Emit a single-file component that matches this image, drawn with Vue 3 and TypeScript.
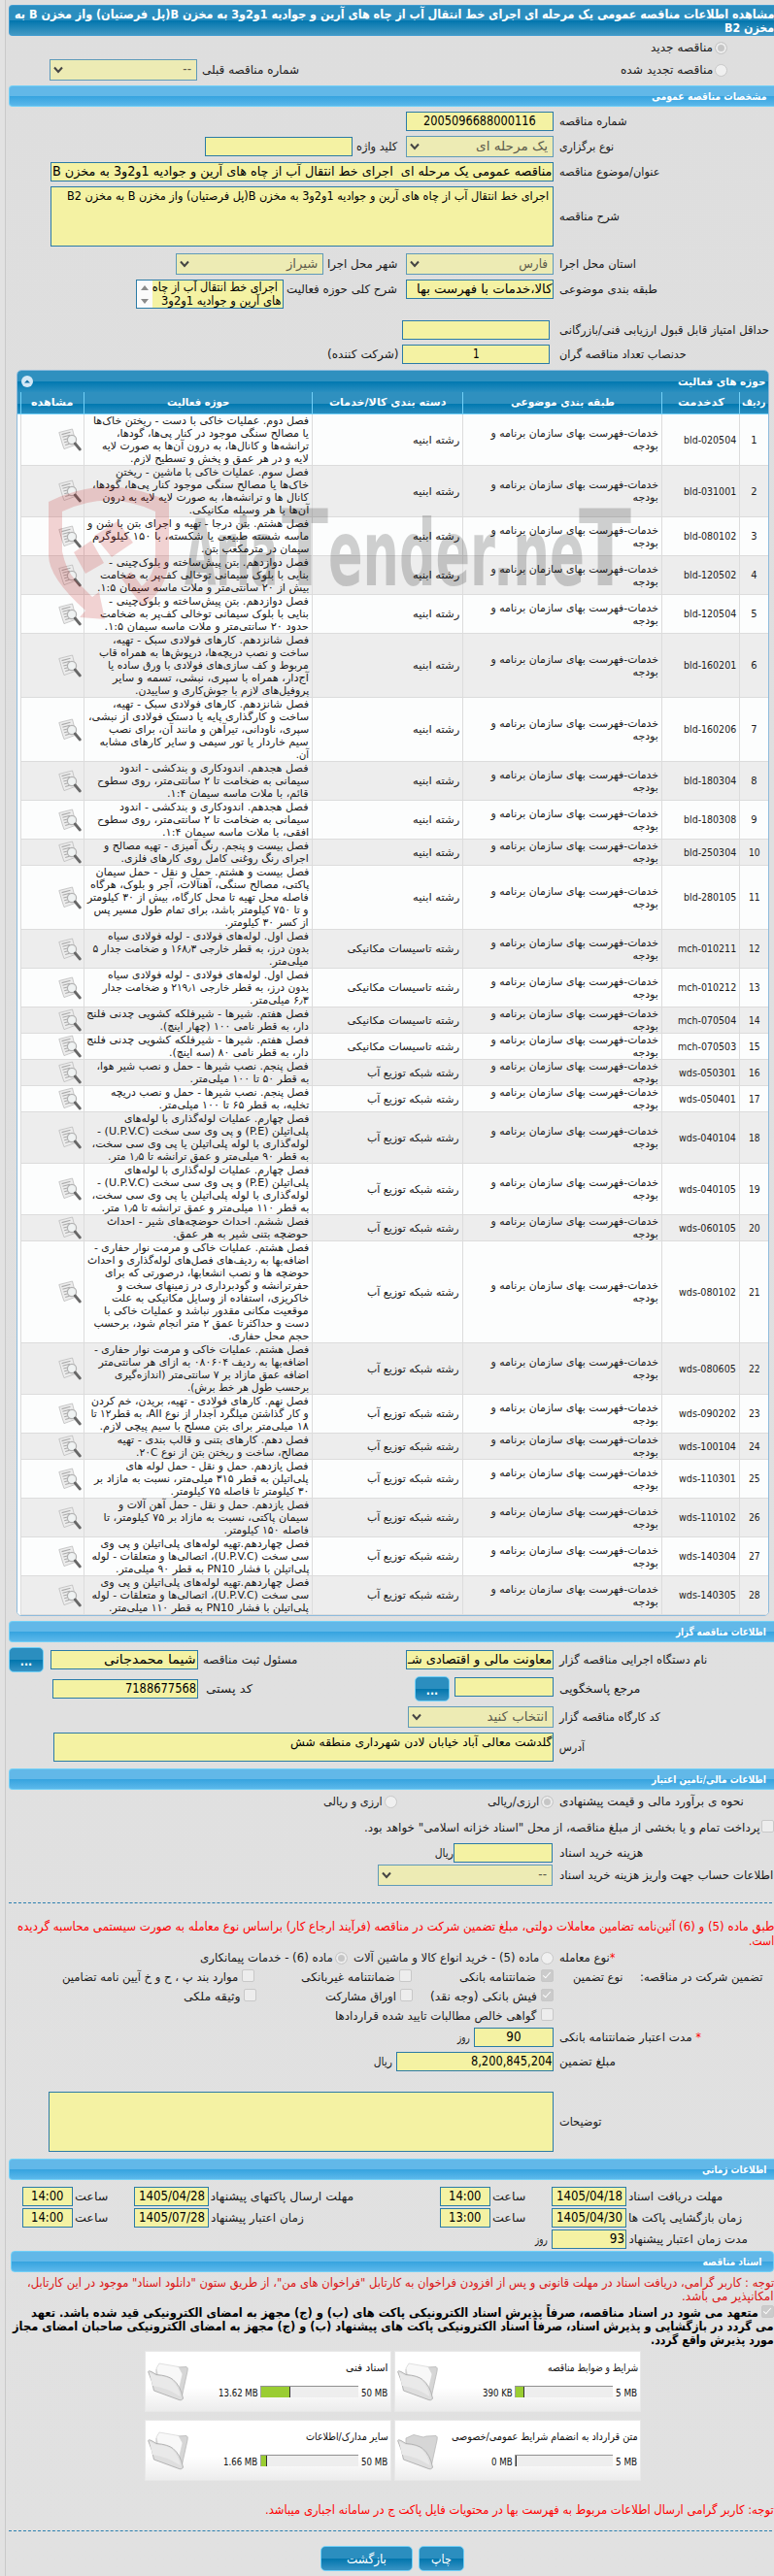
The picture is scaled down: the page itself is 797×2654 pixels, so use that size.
<script setup lang="ts">
import { defineComponent, h, onMounted, ref } from 'vue'

// One line of text, condensed or widened to the width of its slot.
const Fit = defineComponent({
  props: { w: { type: Number, required: true }, t: { type: String, required: true } },
  setup(props) {
    const inner = ref<HTMLElement | null>(null)
    const scale = ref(1)
    onMounted(() => {
      if (inner.value) scale.value = props.w / inner.value.offsetWidth
    })
    return () =>
      h('span', { class: 'fit', style: { width: props.w + 'px' } }, [
        h('span', { ref: inner, class: 'fit-in', style: { transform: `scaleX(${scale.value})` } }, props.t),
      ])
  },
})

type Line = [number, string]
interface Activity { code: string; group: number; lines: Line[] }

const groups: Line[] = [
  [48, 'رشته ابنیه'],
  [115.5, 'رشته تاسیسات مکانیکی'],
  [95, 'رشته شبکه توزیع آب'],
]
const codeWidth = (c: string) => (c.startsWith('bld') ? 54.5 : c.startsWith('mch') ? 60.5 : 59)

const activities: Activity[] = [
  { code: 'bld-020504', group: 0, lines: [[222, 'فصل دوم. عملیات خاکی با دست - ریختن خاک‌ها'], [198, 'یا مصالح سنگی موجود در کنار پی‌ها، گودها،'], [213, 'ترانشه‌ها و کانال‌ها، به درون آن‌ها به صورت لایه'], [184, 'لایه و در هر عمق و پخش و تسطیح لازم.']] },
  { code: 'bld-031001', group: 0, lines: [[199, 'فصل سوم. عملیات خاکی با ماشین - ریختن'], [223, 'خاک‌ها یا مصالح سنگی موجود کنار پی‌ها، گودها،'], [212.5, 'کانال ها و ترانشه‌ها، به صورت لایه لایه به درون'], [123.5, 'آن‌ها با هر وسیله مکانیکی.']] },
  { code: 'bld-080102', group: 0, lines: [[228, 'فصل هشتم. بتن درجا - تهیه و اجرای بتن با شن و'], [223, 'ماسه شسته طبیعی یا شکسته، با ۱۵۰ کیلوگرم'], [111, 'سیمان در مترمکعب بتن.']] },
  { code: 'bld-120502', group: 0, lines: [[206, 'فصل دوازدهم. بتن پیش‌ساخته و بلوک‌چینی -'], [215, 'بنایی با بلوک سیمانی توخالی کف‌پر به ضخامت'], [218, 'بیش از ۲۰ سانتی‌متر و ملات ماسه سیمان ۱:۵.']] },
  { code: 'bld-120504', group: 0, lines: [[206, 'فصل دوازدهم. بتن پیش‌ساخته و بلوک‌چینی -'], [215, 'بنایی با بلوک سیمانی توخالی کف‌پر به ضخامت'], [210.5, 'حدود ۲۰ سانتی‌متر و ملات ماسه سیمان ۱:۵.']] },
  { code: 'bld-160201', group: 0, lines: [[202, 'فصل شانزدهم. کارهای فولادی سبک - تهیه،'], [216, 'ساخت و نصب دریچه‌ها، درپوش‌ها به همراه قاب'], [207, 'مربوط و کف سازی‌های فولادی با ورق ساده یا'], [202, 'آج‌دار، همراه با سپری، نبشی، تسمه و سایر'], [179, 'پروفیل‌های لازم با جوش‌کاری و ساییدن.']] },
  { code: 'bld-160206', group: 0, lines: [[202, 'فصل شانزدهم. کارهای فولادی سبک - تهیه،'], [227, 'ساخت و کارگذاری پایه یا دستک فولادی از نبشی،'], [206, 'سپری، ناودانی، تیرآهن و مانند آن، برای نصب'], [215.5, 'سیم خاردار یا تور سیمی و سایر کارهای مشابه'], [13, 'آن.']] },
  { code: 'bld-180304', group: 0, lines: [[195, 'فصل هجدهم. اندودکاری و بندکشی - اندود'], [218, 'سیمانی به ضخامت تا ۲ سانتی‌متر، روی سطوح'], [146, 'قائم، با ملات ماسه سیمان ۱:۴.']] },
  { code: 'bld-180308', group: 0, lines: [[195, 'فصل هجدهم. اندودکاری و بندکشی - اندود'], [218, 'سیمانی به ضخامت تا ۲ سانتی‌متر، روی سطوح'], [151, 'افقی، با ملات ماسه سیمان ۱:۴.']] },
  { code: 'bld-250304', group: 0, lines: [[211, 'فصل بیست و پنجم. رنگ آمیزی - تهیه مصالح و'], [193.5, 'اجرای رنگ روغنی کامل روی کارهای فلزی.']] },
  { code: 'bld-280105', group: 0, lines: [[219.5, 'فصل بیست و هشتم. حمل و نقل - حمل سیمان'], [225, 'پاکتی، مصالح سنگی، آهنآلات، آجر و بلوک، هرگاه'], [228, 'فاصله محل تهیه تا محل کارگاه، بیش از ۳۰ کیلومتر'], [221.5, 'و تا ۷۵۰ کیلومتر باشد، برای تمام طول مسیر پس'], [86.5, 'از کسر ۳۰ کیلومتر.']] },
  { code: 'mch-010211', group: 1, lines: [[207, 'فصل اول. لوله‌های فولادی - لوله فولادی سیاه'], [222.5, 'بدون درز، به قطر خارجی ۱۶۸٫۳ و ضخامت جدار ۵'], [41, 'میلی‌متر.']] },
  { code: 'mch-010212', group: 1, lines: [[207, 'فصل اول. لوله‌های فولادی - لوله فولادی سیاه'], [212.5, 'بدون درز، به قطر خارجی ۲۱۹٫۱ و ضخامت جدار'], [61, '۶٫۳ میلی‌متر.']] },
  { code: 'mch-070504', group: 1, lines: [[229, 'فصل هفتم. شیرها - شیرفلکه کشویی چدنی فلنج'], [153.5, 'دار، به قطر نامی ۱۰۰ (چهار اینچ).']] },
  { code: 'mch-070503', group: 1, lines: [[229, 'فصل هفتم. شیرها - شیرفلکه کشویی چدنی فلنج'], [144, 'دار، به قطر نامی ۸۰ (سه اینچ).']] },
  { code: 'wds-050301', group: 2, lines: [[218.5, 'فصل پنجم. نصب شیرها - حمل و نصب شیر هوا،'], [122.5, 'به قطر ۵۰ تا ۱۰۰ میلی‌متر.']] },
  { code: 'wds-050401', group: 2, lines: [[204, 'فصل پنجم. نصب شیرها - حمل و نصب دریچه'], [154.5, 'تخلیه، به قطر ۶۵ تا ۱۰۰ میلی‌متر.']] },
  { code: 'wds-040104', group: 2, lines: [[190, 'فصل چهارم. عملیات لوله‌گذاری با لوله‌های'], [218, 'پلی‌اتیلن (P.E) و پی وی سی سخت (U.P.V.C) -'], [223.5, 'لوله‌گذاری با لوله پلی‌اتیلن یا پی وی سی سخت،'], [207, 'به قطر ۹۰ میلی‌متر و عمق ترانشه تا ۱٫۵ متر.']] },
  { code: 'wds-040105', group: 2, lines: [[190, 'فصل چهارم. عملیات لوله‌گذاری با لوله‌های'], [218, 'پلی‌اتیلن (P.E) و پی وی سی سخت (U.P.V.C) -'], [223.5, 'لوله‌گذاری با لوله پلی‌اتیلن یا پی وی سی سخت،'], [213.5, 'به قطر ۱۱۰ میلی‌متر و عمق ترانشه تا ۱٫۵ متر.']] },
  { code: 'wds-060105', group: 2, lines: [[208, 'فصل ششم. احداث حوضچه‌های شیر - احداث'], [140, 'حوضچه بتنی شیر به هر عمق.']] },
  { code: 'wds-080102', group: 2, lines: [[221, 'فصل هشتم. عملیات خاکی و مرمت نوار حفاری -'], [228, 'اضافه‌بها به ردیف‌های فصل‌های لوله‌گذاری و احداث'], [210, 'حوضچه ها و نصب انشعابها، درصورتی که برای'], [197, 'حفرترانشه و گودبرداری در زمینهای سخت و'], [203, 'خاکریزی، استفاده از وسایل مکانیکی به علت'], [211, 'موقعیت مکانی مقدور نباشد و عملیات خاکی با'], [221.5, 'دست و حداکثرتا عمق ۲ متر انجام شود، برحسب'], [83, 'حجم محل حفاری.']] },
  { code: 'wds-080605', group: 2, lines: [[221, 'فصل هشتم. عملیات خاکی و مرمت نوار حفاری -'], [216.5, 'اضافه‌بها به ردیف ۰۸۰۶۰۴ به ازای هر سانتی‌متر'], [200, 'اضافه عمق مازاد بر ۷ سانتی‌متر (اندازه‌گیری'], [125, 'برحسب طول هر خط برش).']] },
  { code: 'wds-090202', group: 2, lines: [[224, 'فصل نهم. کارهای فولادی - تهیه، بریدن، خم کردن'], [224.5, 'و کار گذاشتن میلگرد آجدار از نوع AII، به قطر۱۲ تا'], [215.5, '۱۸ میلی‌متر برای بتن مسلح با سیم پیچی لازم.']] },
  { code: 'wds-100104', group: 2, lines: [[197.5, 'فصل دهم. کارهای بتنی و قالب بندی - تهیه'], [178, 'مصالح، ساخت و ریختن بتن از نوع ۲۰C.']] },
  { code: 'wds-110301', group: 2, lines: [[188.5, 'فصل یازدهم. حمل و نقل - حمل لوله های'], [221, 'پلی‌اتیلن به قطر ۳۱۵ میلی‌متر، نسبت به مازاد بر'], [142.5, '۳۰ کیلومتر تا فاصله ۷۵ کیلومتر.']] },
  { code: 'wds-110102', group: 2, lines: [[196, 'فصل یازدهم. حمل و نقل - حمل آهن آلات و'], [211.5, 'سیمان پاکتی، نسبت به مازاد بر ۷۵ کیلومتر، تا'], [87.5, 'فاصله ۱۵۰ کیلومتر.']] },
  { code: 'wds-140304', group: 2, lines: [[214.5, 'فصل چهاردهم.تهیه لوله‌های پلی‌اتیلن و پی وی'], [223.5, 'سی سخت (U.P.V.C)، اتصالی‌ها و متعلقات - لوله'], [199, 'پلی‌اتیلن با فشار PN10 به قطر ۹۰ میلی‌متر.']] },
  { code: 'wds-140305', group: 2, lines: [[214.5, 'فصل چهاردهم.تهیه لوله‌های پلی‌اتیلن و پی وی'], [223.5, 'سی سخت (U.P.V.C)، اتصالی‌ها و متعلقات - لوله'], [206, 'پلی‌اتیلن با فشار PN10 به قطر ۱۱۰ میلی‌متر.']] },
]

const heads: Line[] = [[24, 'ردیف'], [48, 'کدخدمت'], [107, 'طبقه بندی موضوعی'], [120, 'دسته بندی کالا/خدمات'], [64, 'حوزه فعالیت'], [43, 'مشاهده']]

interface Doc { title: Line; max: Line; used: Line; fill: number; empty?: boolean }
const docs: Doc[] = [
  { title: [93, 'شرایط و ضوابط مناقصه'], max: [22.5, '5 MB'], used: [31, '390 KB'], fill: 9 },
  { title: [44, 'اسناد فنی'], max: [27.5, '50 MB'], used: [41, '13.62 MB'], fill: 30 },
  { title: [192, 'متن قرارداد به انضمام شرایط عمومی/خصوصی'], max: [22.5, '5 MB'], used: [22, '0 MB'], fill: 1, empty: true },
  { title: [85, 'سایر مدارک/اطلاعات'], max: [27.5, '50 MB'], used: [35.5, '1.66 MB'], fill: 6 },
]
</script>

<template>
  <div class="page">
    <div class="sheet" dir="rtl">
      <header class="bar main-bar">
        <Fit :w="782" t="مشاهده اطلاعات مناقصه عمومی یک مرحله ای اجرای خط انتقال آب از چاه های آرین و جوادیه 1و2و3 به مخزن B(پل فرصتیان) واز مخزن B به" />
        <Fit :w="51" t="مخزن B2" />
      </header>

      <div class="row h24 pad51"><i class="radio on"></i><Fit class="ms2" :w="64" t="مناقصه جدید" /></div>
      <div class="row h22 pad51">
        <i class="radio"></i><Fit class="ms2" :w="95" t="مناقصه تجدید شده" />
        <Fit class="prev-label" :w="100" t="شماره مناقصه قبلی" />
        <span class="field select w152 ms5"><Fit :w="9" t="--" /><svg class="chev" viewBox="0 0 10 8"><path d="M1 1.5 5 6 9 1.5" /></svg></span>
      </div>

      <div class="bar sub-bar mt5"><Fit :w="119" t="مشخصات مناقصه عمومی" /></div>
      <div class="row h30">
        <span class="lab"><Fit :w="70" t="شماره مناقصه" /></span>
        <span class="field w152 center"><Fit :w="116" t="2005096688000116" /></span>
      </div>
      <div class="row h22">
        <span class="lab"><Fit :w="56" t="نوع برگزاری" /></span>
        <span class="field select w152"><Fit :w="74" t="یک مرحله ای" /><svg class="chev" viewBox="0 0 10 8"><path d="M1 1.5 5 6 9 1.5" /></svg></span>
        <Fit class="ms9" :w="42" t="کلید واژه" />
        <span class="field w152 ms4"></span>
      </div>
      <div class="row h30">
        <span class="lab"><Fit :w="103" t="عنوان/موضوع مناقصه" /></span>
        <span class="field w518"><Fit :w="514" t="مناقصه عمومی یک مرحله ای  اجرای خط انتقال آب از چاه های آرین و جوادیه 1و2و3 به مخزن B" /></span>
      </div>
      <div class="row h62">
        <span class="lab"><Fit :w="62" t="شرح مناقصه" /></span>
        <span class="field area w518 pe4 t12"><Fit :w="496" t="اجرای خط انتقال آب از چاه های آرین و جوادیه 1و2و3 به مخزن B(پل فرصتیان) واز مخزن B به مخزن B2" /></span>
      </div>
      <div class="row h22 mt7">
        <span class="lab"><Fit :w="79" t="استان محل اجرا" /></span>
        <span class="field select w152"><Fit :w="30" t="فارس" /><svg class="chev" viewBox="0 0 10 8"><path d="M1 1.5 5 6 9 1.5" /></svg></span>
        <Fit class="ms9" :w="72" t="شهر محل اجرا" />
        <span class="field select w152 ms4"><Fit :w="32" t="شیراز" /><svg class="chev" viewBox="0 0 10 8"><path d="M1 1.5 5 6 9 1.5" /></svg></span>
      </div>
      <div class="row h30 mt5 top">
        <span class="lab lh20"><Fit :w="101" t="طبقه بندی موضوعی" /></span>
        <span class="field w152"><Fit :w="139" t="کالا،خدمات با فهرست بها" /></span>
        <span class="ms9 lh20"><Fit :w="114" t="شرح کلی حوزه فعالیت" /></span>
        <span class="field area scroll w152 ms3">
          <span class="scroll-text"><Fit class="me4" :w="129" t="اجرای خط انتقال آب از چاه" /><Fit :w="124" t="های آرین و جوادیه 1و2و3" /></span>
          <svg class="scrollbar" viewBox="0 0 16 28"><path d="M4 10 8 5 12 10ZM4 19 8 24 12 19Z" /></svg>
        </span>
      </div>
      <div class="row h20 mt12">
        <span class="lab wide"><Fit :w="216" t="حداقل امتیاز قابل قبول ارزیابی فنی/بازرگانی" /></span><span class="field w152"></span>
      </div>
      <div class="row h20 mt5">
        <span class="lab wide"><Fit :w="131" t="حدنصاب تعداد مناقصه گران" /></span>
        <span class="field w152 center"><Fit :w="7" t="1" /></span><Fit class="ms3" :w="74" t="(شرکت کننده)" />
      </div>

      <section class="table">
        <div class="title-bar">
          <Fit :w="90" t="حوزه های فعالیت" />
          <svg class="collapse" viewBox="0 0 12 12"><circle cx="6" cy="6" r="6" fill="#d4e8f6" /><path d="M3 7.4 6 4.4 9 7.4Z" fill="#126fa4" /></svg>
        </div>
        <div class="trow thead"><span v-for="hd in heads" :key="hd[1]"><Fit :w="hd[0]" :t="hd[1]" /></span><span></span></div>
        <div v-for="(a, i) in activities" :key="a.code" class="trow tbody" :class="{ alt: i % 2 === 1 }">
          <span class="num"><Fit :w="i < 9 ? 6 : 12" :t="String(i + 1)" /></span>
          <span class="code" dir="ltr"><Fit :w="codeWidth(a.code)" :t="a.code" /></span>
          <span class="cat"><Fit :w="172.5" t="خدمات-فهرست بهای سازمان برنامه و" /><Fit :w="26.5" t="بودجه" /></span>
          <span class="grp"><Fit :w="groups[a.group][0]" :t="groups[a.group][1]" /></span>
          <span class="desc"><Fit v-for="(l, k) in a.lines" :key="k" :w="l[0]" :t="l[1]" /></span>
          <span class="view">
            <svg viewBox="0 0 24 24">
              <path d="M0.8 4.5 14.5 1 18.6 17 6 21.6C3.5 15 2.5 10 .8 4.5Z" fill="#ececec" stroke="#b4b4b4" stroke-width=".7" />
              <path d="M3.5 6.6 12.5 4.2M4.4 9.3 12 7.3M5.3 12 10.5 10.7M6.2 14.7 10 13.7M7.2 17.5 11.5 16.2" stroke="#aaa" stroke-width="1.1" />
              <circle cx="14" cy="12" r="4.6" fill="#f0f3f3" fill-opacity=".85" stroke="#b2b2b2" stroke-width="1.2" />
              <path d="M17.3 16 22.3 22" stroke="#686868" stroke-width="2.8" stroke-linecap="round" />
            </svg>
          </span>
          <span></span>
        </div>
        <svg class="watermark" viewBox="0 0 610 150">
          <g fill="#c00000" fill-opacity=".17">
            <path d="M0 17Q62-14 124 17V76Q122 108 97 125L75 96 85 89 96 104Q110 92 110 70V27Q62 4 14 27V68Q18 88 28 98L45 115 52 110 58 138 32 136 38 129Q0 95 0 72Z" />
            <path d="M26 69 44 57 57 80 38 91ZM47 52 71 37 87 59 65 74Z" />
          </g>
          <g fill="#000" fill-opacity=".18">
            <text x="140" y="103" font-size="94" textLength="96" lengthAdjust="spacingAndGlyphs">Aria</text>
            <text x="240" y="103" font-size="108" textLength="48" lengthAdjust="spacingAndGlyphs">T</text>
            <text x="288" y="103" font-size="94" textLength="172" lengthAdjust="spacingAndGlyphs">ender</text>
            <text x="458" y="103" font-size="94" textLength="94" lengthAdjust="spacingAndGlyphs">.ne</text>
            <text x="546" y="103" font-size="108" textLength="54" lengthAdjust="spacingAndGlyphs">T</text>
          </g>
        </svg>
      </section>

      <div class="bar sub-bar mt5"><Fit :w="93" t="اطلاعات مناقصه گزار" /></div>
      <div class="row h26 mt5">
        <span class="lab"><Fit :w="152" t="نام دستگاه اجرایی مناقصه گزار" /></span>
        <span class="field w152"><Fit :w="148" t="معاونت مالی و اقتصادی شـ" /></span>
        <Fit class="reg-label" :w="97" t="مسئول ثبت مناقصه" />
        <span class="field w152 ms5"><Fit :w="95" t="شیما محمدجانی" /></span>
        <span class="btn more ms7">...</span>
      </div>
      <div class="row h26 mt4">
        <span class="lab"><Fit :w="83" t="مرجع پاسخگویی" /></span>
        <span class="field w102 up2"></span><span class="btn more ms5">...</span>
        <Fit class="zip-label" :w="48" t="کد پستی" /><span class="field w150 ms8"><Fit :w="73" t="7188677568" /></span>
      </div>
      <div class="row h22 mt5">
        <span class="lab"><Fit :w="104" t="کد کارگاه مناقصه گزار" /></span>
        <span class="field select w150"><Fit :w="62.5" t="انتخاب کنید" /><svg class="chev" viewBox="0 0 10 8"><path d="M1 1.5 5 6 9 1.5" /></svg></span>
      </div>
      <div class="row h30 mt5">
        <span class="lab"><Fit :w="26" t="آدرس" /></span>
        <span class="field area w515 t12"><Fit :w="269" t="گلدشت معالی آباد خیابان لادن شهرداری منطقه شش" /></span>
      </div>

      <div class="bar sub-bar mt7"><Fit :w="118" t="اطلاعات مالی/تامین اعتبار" /></div>
      <div class="row h24">
        <span class="lab"><Fit :w="190" t="نحوه ی برآورد مالی و قیمت پیشنهادی" /></span>
        <i class="radio on"></i><Fit class="ms2" :w="53" t="ارزی/ریالی" />
        <i class="radio far"></i><Fit class="ms2" :w="61" t="ارزی و ریالی" />
      </div>
      <div class="row h20 mt5 pad3"><i class="check up2"></i><Fit class="ms1" :w="408" t="پرداخت تمام و یا بخشی از مبلغ مناقصه، از محل &quot;اسناد خزانه اسلامی&quot; خواهد بود." /></div>
      <div class="row h20 cost">
        <span class="lab one"><Fit :w="86" t="هزینه خرید اسناد" /></span><span class="field w102"></span><Fit :w="19" t="ریال" />
      </div>
      <div class="row h22 mt2">
        <span class="lab one"><Fit :w="220" t="اطلاعات حساب جهت واریز هزینه خرید اسناد" /></span>
        <span class="field select w180"><Fit :w="9" t="--" /><svg class="chev" viewBox="0 0 10 8"><path d="M1 1.5 5 6 9 1.5" /></svg></span>
      </div>

      <div class="rule first-rule"></div>
      <p class="notice bright first-notice">
        <Fit :w="779" t="طبق ماده (5) و (6) آئین‌نامه تضامین معاملات دولتی، مبلغ تضمین شرکت در مناقصه (فرآیند ارجاع کار) براساس نوع معامله به صورت سیستمی محاسبه گردیده" />
        <Fit :w="26" t="است." />
      </p>
      <div class="row h20">
        <span class="lab"><b class="star">*</b><Fit :w="52" t="نوع معامله" /></span>
        <i class="radio"></i><Fit class="ms2" :w="191" t="ماده (5) - خرید انواع کالا و ماشین آلات" />
        <i class="radio on ms6"></i><Fit class="ms2" :w="137" t="ماده (6) - خدمات پیمانکاری" />
      </div>
      <div class="row h20 kinds">
        <span class="kind-head"><Fit :w="126" t="تضمین شرکت در مناقصه:" /><Fit :w="52" t="نوع تضمین" /></span>
        <i class="check on"></i><Fit class="ms5" :w="79" t="ضمانتنامه بانکی" />
        <i class="check k1"></i><Fit class="ms4" :w="97" t="ضمانتنامه غیربانکی" />
        <i class="check k2"></i><Fit class="ms4" :w="181" t="موارد بند پ ، ح و خ آیین نامه تضامین" />
      </div>
      <div class="row h20 kinds">
        <span class="lab"></span>
        <i class="check on"></i><Fit class="ms4" :w="110" t="فیش بانکی (وجه نقد)" />
        <i class="check k3"></i><Fit class="ms4" :w="73" t="اوراق مشارکت" />
        <i class="check k4"></i><Fit class="ms4" :w="58" t="وثیقه ملکی" />
      </div>
      <div class="row h20 kinds"><span class="lab"></span><i class="check"></i><Fit class="ms5" :w="207" t="گواهی خالص مطالبات تایید شده قراردادها" /></div>
      <div class="row h20 mt2">
        <span class="lab"><b class="star">*</b>&nbsp;<Fit :w="137" t="مدت اعتبار ضمانتنامه بانکی" /></span>
        <span class="field w82 center"><Fit :w="15" t="90" /></span><Fit class="ms4" :w="13" t="روز" />
      </div>
      <div class="row h20 mt5">
        <span class="lab"><Fit :w="58" t="مبلغ تضمین" /></span>
        <span class="field w162"><Fit :w="84" t="8,200,845,204" /></span><Fit class="ms4" :w="19" t="ریال" />
      </div>
      <div class="row h62 mt21"><span class="lab"><Fit :w="43" t="توضیحات" /></span><span class="field area w520"></span></div>

      <div class="bar sub-bar mt7"><Fit :w="66" t="اطلاعات زمانی" /></div>
      <div class="times">
        <div class="row h20">
          <span class="tlab"><Fit :w="97" t="مهلت دریافت اسناد" /></span><span class="field w77 center"><Fit :w="68" t="1405/04/18" /></span>
          <Fit class="hour" :w="34" t="ساعت" /><span class="field w52 center ms2"><Fit :w="33" t="14:00" /></span>
          <span class="tlab second"><Fit :w="147.5" t="مهلت ارسال پاکتهای پیشنهاد" /></span><span class="field w77 center"><Fit :w="68" t="1405/04/28" /></span>
          <Fit class="hour" :w="34" t="ساعت" /><span class="field w52 center ms2"><Fit :w="33" t="14:00" /></span>
        </div>
        <div class="row h20">
          <span class="tlab"><Fit :w="117" t="زمان بازگشایی پاکت ها" /></span><span class="field w77 center"><Fit :w="68" t="1405/04/30" /></span>
          <Fit class="hour" :w="34" t="ساعت" /><span class="field w52 center ms2"><Fit :w="33" t="13:00" /></span>
          <span class="tlab second"><Fit :w="96" t="زمان اعتبار پیشنهاد" /></span><span class="field w77 center"><Fit :w="68" t="1405/07/28" /></span>
          <Fit class="hour" :w="34" t="ساعت" /><span class="field w52 center ms2"><Fit :w="33" t="14:00" /></span>
        </div>
        <div class="row h20">
          <span class="tlab"><Fit :w="122.5" t="مدت زمان اعتبار پیشنهاد" /></span><span class="field w77"><Fit :w="15" t="93" /></span><Fit class="ms4" :w="13" t="روز" />
        </div>
      </div>

      <div class="bar sub-bar docs-bar"><Fit :w="61.5" t="اسناد مناقصه" /></div>
      <p class="notice dark docs-notice">
        <Fit :w="769" t="توجه : کاربر گرامی، دریافت اسناد در مهلت قانونی و پس از افزودن فراخوان به کارتابل &quot;فراخوان های من&quot;، از طریق ستون &quot;دانلود اسناد&quot; موجود در این کارتابل،" />
        <Fit :w="95" t="امکانپذیر می باشد." />
      </p>
      <div class="pledge">
        <div class="row"><i class="check on up2"></i><Fit class="ms3" :w="749" t="متعهد می شود در اسناد مناقصه، صرفاً پذیرش اسناد الکترونیکی پاکت های (ب) و (ج) مجهز به امضای الکترونیکی قید شده باشد. تعهد" /></div>
        <Fit :w="784" t="می گردد در بازگشایی و پذیرش اسناد، صرفاً اسناد الکترونیکی پاکت های پیشنهاد (ب) و (ج) مجهز به امضای الکترونیکی صاحبان امضای مجاز" />
        <Fit :w="127" t="مورد پذیرش واقع گردد." />
      </div>
      <div class="cards">
        <div v-for="d in docs" :key="d.title[1]" class="card">
          <div class="card-body">
            <div class="card-title"><Fit :w="d.title[0]" :t="d.title[1]" /></div>
            <div class="meter-row">
              <span dir="ltr"><Fit :w="d.max[0]" :t="d.max[1]" /></span>
              <span class="meter" dir="ltr"><i :style="{ width: d.fill + 'px' }"></i></span>
              <span dir="ltr"><Fit :w="d.used[0]" :t="d.used[1]" /></span>
            </div>
          </div>
          <svg class="folder" viewBox="0 0 42 42">
            <path d="M9 8 17 4.5 27 7 30 6 40 5.5Q42 6 41 10L35.5 35 32 38 9 20Z" fill="#d6d6d6" stroke="#b9b9b9" stroke-width=".8" />
            <path v-if="!d.empty" d="M9 7 12 2 32 5.5 36 13 32 30 12 22Z" fill="#f8f8f8" stroke="#d4d4d4" stroke-width=".7" />
            <path d="M.6 10.5Q1 9 4 10.5L9 13.5Q21 14.5 26 18.5 34 25 36.5 38 35 41 31 39L6.5 30Q5 20 .6 10.5Z" fill="#dedede" stroke="#adadad" stroke-width=".9" />
            <path d="M2 11.5 9 14.7Q21 15.5 25 19.3 32 26 33.5 36 20 27 5 25Z" fill="#e9e9e9" />
          </svg>
        </div>
      </div>
      <p class="notice bright last-notice"><Fit :w="524" t="توجه: کاربر گرامی ارسال اطلاعات مربوط به فهرست بها در محتویات فایل پاکت ج در سامانه اجباری میباشد." /></p>
      <div class="rule"></div>
      <div class="actions">
        <span class="btn w47"><Fit :w="21" t="چاپ" /></span>
        <span class="btn w95"><Fit :w="41" t="بازگشت" /></span>
      </div>
    </div>
  </div>
</template>

<style>
body { background: #e0e0e0; }
.fit { display: inline-block; flex: none; white-space: pre; overflow: visible; vertical-align: top; }
.fit-in { display: inline-block; vertical-align: top; transform-origin: 100% 50%; }
[dir='rtl'] .fit { direction: rtl; text-align: right; }
[dir='ltr'] > .fit { direction: ltr; text-align: left; }
[dir='ltr'] > .fit > .fit-in { transform-origin: 0 50%; }
</style>

<style scoped>
.page { width: 797px; height: 2654px; overflow: hidden; position: relative; box-sizing: border-box; background: linear-gradient(90deg, #e2e2e2 5px, #c9c9c9 5px, #c9c9c9 6px, transparent 6px), linear-gradient(#dedede, #e1e1e1); font: 12px/15px 'DejaVu Sans Condensed', 'DejaVu Sans', sans-serif; color: #1a1a1a; }
.sheet { width: 791px; margin-left: 9px; padding-top: 5px; box-sizing: border-box; }
.bar { box-sizing: border-box; color: #fff; font-weight: bold; }
.main-bar { height: 32px; padding: 2px 3px 0 0; border: 1px solid #3f9bd0; border-right: 0; border-radius: 4px; background: linear-gradient(#2b8ebf 0 15px, #0075ad 15px, #4399c4 100%); font-size: 13px; line-height: 14px; display: flex; flex-direction: column; }
.sub-bar { height: 22px; padding-right: 11px; border: 1px solid #72d0f7; border-right: 0; border-radius: 4px; background: linear-gradient(#62b8e8 0 10px, #35a3df 10px, #5cb8ea 100%); font-size: 11px; line-height: 21px; }
.docs-bar { margin: 2px 3px 0 2px; border-right: 1px solid #72d0f7; }
.row { display: flex; align-items: center; }
.row.top { align-items: flex-start; }
.h20 { height: 20px; } .h22 { height: 22px; } .h24 { height: 24px; } .h26 { height: 26px; } .h30 { height: 30px; } .h62 { height: 62px; }
.mt2 { margin-top: 2px; } .mt4 { margin-top: 4px; } .mt5 { margin-top: 5px; } .mt7 { margin-top: 7px; } .mt12 { margin-top: 12px; } .mt21 { margin-top: 21px; }
.ms1 { margin-right: 1px; } .ms2 { margin-right: 2px; } .ms3 { margin-right: 3px; } .ms4 { margin-right: 4px; } .ms5 { margin-right: 5px; } .ms6 { margin-right: 6px; } .ms7 { margin-right: 7px; } .ms8 { margin-right: 8px; } .ms9 { margin-right: 9px; }
.me4 { margin-right: 4px; }
.pad51 { padding-right: 51px; } .pad3 { padding-right: 3px; }
.up2 { margin-bottom: 4px; }
.lab { flex: none; width: 224px; margin-left: 6px; text-align: left; }
.lab.wide { margin-left: 10px; }
.lab.one { margin-left: 7px; }
.lh20 { line-height: 20px; }
.star { color: #f00; font-weight: normal; }
.prev-label { margin-right: 331px; }
.reg-label { margin-right: 112px; }
.zip-label { margin-right: 167px; }
.field { flex: none; box-sizing: border-box; height: 20px; border: 1px solid #2b7ba6; background: #f4f2a3; font-size: 13.3px; line-height: 18px; color: #000; display: flex; padding: 0 1px; overflow: hidden; }
.field.center { justify-content: center; }
.field.select { height: 22px; background: #edebb4; border-color: #5f9ab8; color: #5d5c4d; align-items: center; justify-content: space-between; padding: 0 5px 0 3px; font-size: 13.3px; }
.chev { width: 10px; height: 8px; fill: none; stroke: #444; stroke-width: 2; }
.field.area { height: 100%; align-items: flex-start; }
.field.pe4 { padding-right: 4px; }
.t12 { font-size: 12px; }
.w47 { width: 47px; } .w52 { width: 52px; } .w77 { width: 77px; } .w82 { width: 82px; } .w95 { width: 95px; } .w102 { width: 102px; } .w150 { width: 150px; } .w152 { width: 152px; } .w162 { width: 162px; } .w180 { width: 180px; } .w515 { width: 515px; } .w518 { width: 518px; } .w520 { width: 520px; }
.scroll { justify-content: space-between; padding-left: 0; }
.scroll-text { display: flex; flex-direction: column; line-height: 14px; font-size: 12.5px; }
.scrollbar { width: 16px; height: 28px; background: #fbfbfb; fill: #8b8b8b; }
.radio { flex: none; box-sizing: border-box; width: 13px; height: 13px; border: 1px solid #c8c8c8; border-radius: 50%; background: #f0f0f0; }
.radio.on { background: #c6c6c6; box-shadow: inset 0 0 0 2px #ededed; }
.radio.far { margin-right: 93px; }
.check { flex: none; box-sizing: border-box; width: 13px; height: 13px; border: 1px solid #c8c8c8; border-radius: 2px; background: #ededed; }
.check.on { background: #cbcbcb; }
.check.on::after { content: ''; display: block; width: 3px; height: 7px; margin: 0 4px 0 0; border: solid #fff; border-width: 0 1.6px 1.6px 0; transform: rotate(42deg); }
.kinds .check { margin-bottom: 3px; }
.kind-head { flex: none; display: flex; gap: 17px; width: 215px; padding-right: 15px; }
.k1 { margin-right: 49px; } .k2 { margin-right: 48px; } .k3 { margin-right: 18px; } .k4 { margin-right: 71px; }
.cost { margin-top: 6px; }
.btn { flex: none; box-sizing: border-box; height: 26px; border: 1px solid #72d0f7; border-radius: 5px; background: linear-gradient(#2b8ebf 0 12px, #0075ad 12px, #3994c4 100%); color: #fff; text-align: center; line-height: 26px; font-size: 13px; }
.more { width: 36px; font-weight: bold; font-size: 12px; line-height: 28px; }

.table { position: relative; width: 775px; box-sizing: border-box; margin: 6px 8px 0 0; border: 1px solid #8ebbdc; border-radius: 5px; overflow: hidden; background: #fcfdfd; font-size: 11px; line-height: 13px; }
.title-bar { display: flex; align-items: center; justify-content: space-between; height: 22px; padding: 0 3px 0 4px; color: #fff; font-weight: bold; background: linear-gradient(#2f90bf 0 11px, #0078b0 11px, #2b8fc0 100%); }
.collapse { width: 12px; height: 12px; }
.trow { display: grid; grid-template-columns: 30px 80px 205px 155px 235px 65px 1fr; }
.trow > span { box-sizing: border-box; border-left: 1px solid #dcdcdc; }
.trow > span:last-child { border: 0; background: #fcfdfd; }
.thead { height: 23px; color: #fff; font-weight: bold; background: linear-gradient(#2f90bf 0 12px, #0078b0 12px, #2b8fc0 100%); border-bottom: 1px solid #72d0f7; box-sizing: border-box; }
.thead > span { display: flex; justify-content: center; align-items: center; border-left-color: #72d0f7; padding-bottom: 2px; }
.thead > span:last-child { background: none; }
.tbody > span { display: flex; flex-direction: column; justify-content: center; align-items: flex-start; border-bottom: 1px solid #dcdcdc; padding-right: 3px; }
.tbody.alt > span { background: #ededed; }
.tbody.alt > span:last-child { background: #fcfdfd; }
.tbody > .num { align-items: center; padding: 0; }
.tbody > .code { align-items: flex-end; padding-right: 3px; }
.tbody > .view { align-items: flex-start; padding: 0 2px 0 0; }
.view svg { width: 24px; height: 24px; fill: none; }
.watermark { position: absolute; left: 32px; top: 118px; width: 610px; height: 150px; overflow: visible; }
.watermark text { direction: ltr; unicode-bidi: isolate; font-family: 'DejaVu Sans Condensed', 'DejaVu Sans', sans-serif; font-weight: bold; text-anchor: start; }

.rule { height: 0; border-top: 1px dashed #2b7fae; }
.first-rule { margin-top: 17px; }
.notice { margin: 0; padding-right: 3px; display: flex; flex-direction: column; font-size: 12.5px; }
.bright { color: #f00; }
.dark { color: #dc1414; }
.first-notice { margin-top: 16px; line-height: 15px; }
.docs-notice { margin-top: 4px; line-height: 14px; }
.pledge { display: flex; flex-direction: column; margin-top: 3px; padding-right: 3px; font-weight: bold; font-size: 12.5px; line-height: 14px; color: #000; }
.pledge .row { height: 14px; }
.last-notice { margin-top: 22px; height: 29px; line-height: 15px; }
.times { display: flex; flex-direction: column; gap: 2px; margin-top: 7px; }
.tlab { flex: none; width: 153px; text-align: left; margin-left: 2px; }
.tlab.second { width: 236px; }
.hour { margin-right: 27px; }
.cards { display: grid; grid-template-columns: 254px 254px; gap: 8px 3px; margin: 4px 140px 0 0; width: 511px; }
.card { box-sizing: border-box; height: 63px; display: flex; justify-content: space-between; align-items: center; border: 1px solid #e8e8e8; background: linear-gradient(#fff 60%, #ececec); font-size: 11px; line-height: 14px; color: #111; }
.card-body { height: 61px; width: 204px; flex: none; }
.card-title { padding: 10px 2px 0; height: 35px; box-sizing: border-box; }
.folder { flex: none; width: 42px; height: 42px; margin-left: 2px; }
.meter-row { display: flex; gap: 2px; padding-right: 3px; line-height: 15px; font-size: 10.5px; }
.meter { width: 101px; height: 12px; box-sizing: border-box; border-top: 1px solid #909090; border-left: 1px solid #a0a0a0; background: #eee; margin: 0 1px 0 0; }
.meter i { display: block; height: 100%; box-sizing: border-box; background: #9acd32; border-right: 1px solid #333; }
.actions { display: flex; gap: 6px; padding-right: 322px; margin-top: 15px; }
</style>
